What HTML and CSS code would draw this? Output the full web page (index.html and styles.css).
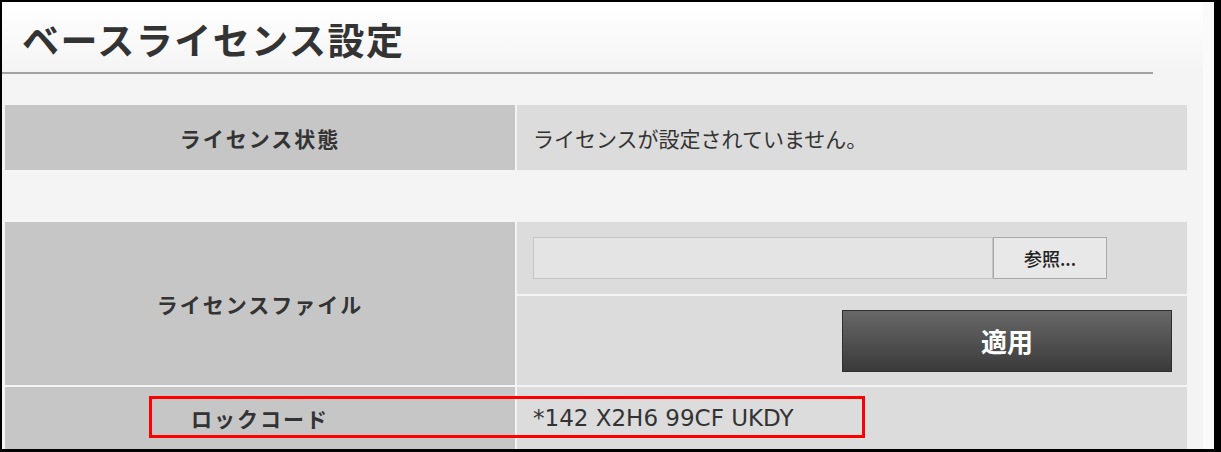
FILE: index.html
```html
<!DOCTYPE html>
<html lang="ja">
<head>
    <meta charset="UTF-8">
    <title>ベースライセンス設定</title>
    <link rel="stylesheet" href="styles.css">
</head>
<body>
    <div class="frame">
        <div class="page">
            <header class="page-header">
                <h1>ベースライセンス設定</h1>
            </header>

            <div class="license-grid">
                <div class="label row-status">ライセンス状態</div>
                <div class="value row-status">ライセンスが設定されていません。</div>

                <div class="spacer"></div>

                <div class="label row-file">ライセンスファイル</div>
                <div class="value file-cell">
                    <div class="file-picker">
                        <span class="file-name"></span>
                        <button class="browse-btn">参照...</button>
                    </div>
                </div>
                <div class="value apply-cell">
                    <button class="apply-btn">適用</button>
                </div>

                <div class="label row-lock">ロックコード</div>
                <div class="value row-lock code">*142 X2H6 99CF UKDY</div>
            </div>

            <div class="highlight"></div>
        </div>
    </div>
</body>
</html>
```

FILE: styles.css
```css
body {
    margin: 0;
    padding: 0;
    font-family: "Noto Sans CJK JP", "Noto Sans", sans-serif;
    color: #333;
}
.frame {
    box-sizing: border-box;
    width: 1221px;
    height: 452px;
    border-style: solid;
    border-color: #000;
    border-width: 2px 7px 3px 2px;
    background: #fafafa;
    overflow: hidden;
}
.page {
    position: relative;
    width: 1201px;
    height: 100%;
    background: #f4f4f4;
}
.page-header {
    height: 72px;
    background: linear-gradient(#ffffff, #f4f4f4);
}
.page-header h1 {
    box-sizing: border-box;
    width: 1151px;
    height: 72px;
    margin: 0;
    padding: 13px 0 0 20px;
    border-bottom: 2px solid #a3a3a3;
    font-size: 37px;
    font-weight: 700;
    letter-spacing: 1.5px;
    line-height: 48px;
    color: #333;
}
.license-grid {
    display: grid;
    grid-template-columns: 510px 670px;
    grid-template-rows: 65px 48px 72px 89px 62px;
    gap: 2px;
    margin: 31px 0 0 3px;
    width: 1182px;
}
.label {
    display: flex;
    align-items: center;
    justify-content: center;
    background: #c6c6c6;
    font-size: 21px;
    font-weight: 700;
    letter-spacing: 2px;
    color: #333;
}
.value {
    display: flex;
    align-items: center;
    padding-left: 16px;
    background: #dcdcdc;
    font-size: 21px;
    color: #333;
}
.spacer {
    grid-column: 1 / span 2;
}
.row-file {
    grid-row: span 2;
}
.file-picker {
    display: flex;
    width: 574px;
    height: 42px;
}
.file-name {
    flex: 1;
    box-sizing: border-box;
    border: 1px solid #c4c4c4;
    background: #e4e4e4;
}
.browse-btn {
    width: 114px;
    border: 1px solid #a8a8a8;
    background: #e8e8e8;
    font-family: inherit;
    font-size: 18px;
    font-weight: 500;
    color: #222;
    padding: 0;
}
.apply-cell {
    justify-content: flex-end;
    padding-right: 15px;
}
.apply-btn {
    width: 330px;
    height: 62px;
    border: 1px solid #2e2e2e;
    background: linear-gradient(#686868, #3a3a3a);
    color: #fff;
    font-family: inherit;
    font-size: 26px;
    font-weight: 700;
}
.code {
    font-family: "DejaVu Sans", sans-serif;
    font-size: 23px;
}
.highlight {
    position: absolute;
    left: 147px;
    top: 394px;
    width: 710px;
    height: 36px;
    border: 3px solid #ff0000;
}
```
